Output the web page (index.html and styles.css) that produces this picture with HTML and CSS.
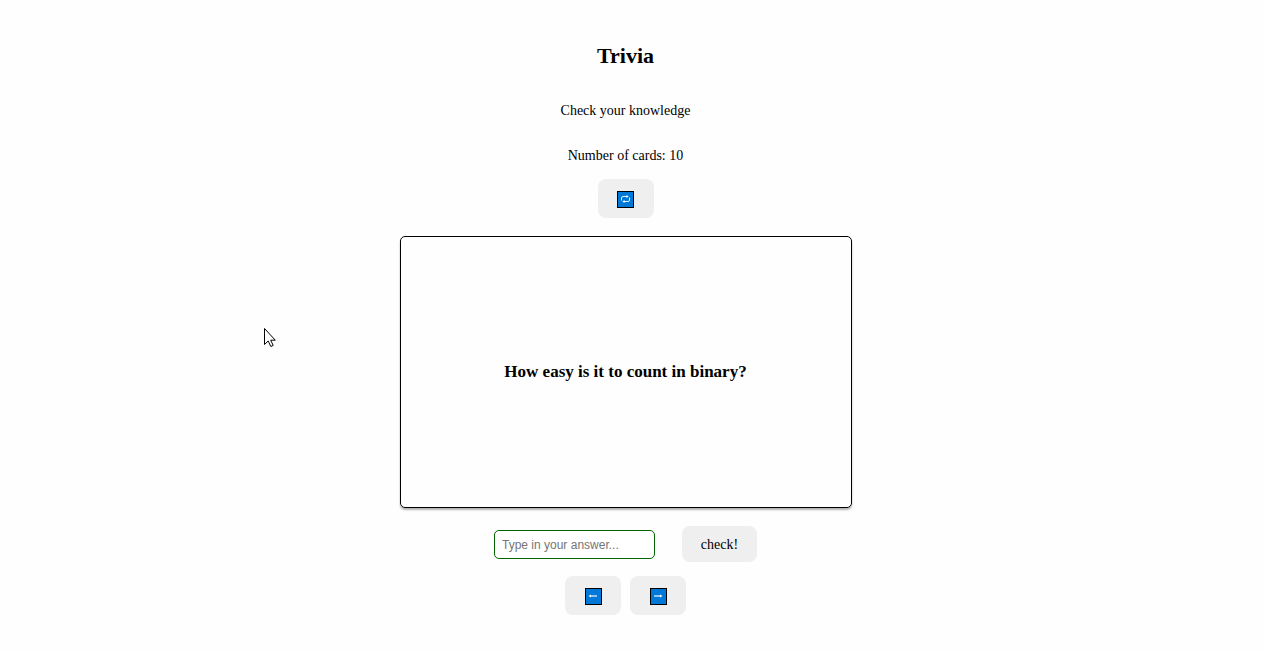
FILE: index.html
```html
<!DOCTYPE html>
<html lang="en">
<head>
<meta charset="utf-8">
<meta name="viewport" content="width=device-width, initial-scale=1">
<title>Trivia</title>
<link rel="stylesheet" href="styles.css">
</head>
<body class="page">
<main class="trivia">
  <header class="intro">
    <h1 class="title">Trivia</h1>
    <p class="subtitle">Check your knowledge</p>
    <p class="count">Number of cards: 10</p>
  </header>
  <button class="button icon-button" type="button" aria-label="Shuffle cards">
    <svg class="glyph" viewBox="0 0 17 17" aria-hidden="true">
      <rect class="tile" x="0.5" y="0.5" width="16" height="16"/>
      <path class="line" d="M11 5.500H6Q4.500 5.500 4.500 7V9.500M6 10.500H11Q12.500 10.500 12.500 9V6.500"/>
      <path class="head" d="M9.500 4L11.700 5.500L9.500 7ZM7.500 9L5.300 10.500L7.500 12Z"/>
    </svg>
  </button>
  <section class="card">
    <h2 class="question">How easy is it to count in binary?</h2>
  </section>
  <form class="answer-form">
    <input class="answer" type="text" aria-label="Your answer" placeholder="Type in your answer...">
    <button class="button check" type="button">check!</button>
  </form>
  <nav class="card-nav" aria-label="Cards">
    <button class="button icon-button" type="button" aria-label="Previous card">
      <svg class="glyph" viewBox="0 0 17 17" aria-hidden="true">
        <rect class="tile" x="0.5" y="0.5" width="16" height="16"/>
        <path class="shaft" d="M5 8H12"/>
        <path class="head" d="M3.500 8L6 6.500V9.500Z"/>
      </svg>
    </button>
    <button class="button icon-button" type="button" aria-label="Next card">
      <svg class="glyph" viewBox="0 0 17 17" aria-hidden="true">
        <rect class="tile" x="0.5" y="0.5" width="16" height="16"/>
        <path class="shaft" d="M4 8H11"/>
        <path class="head" d="M12.500 8L10 6.500V9.500Z"/>
      </svg>
    </button>
  </nav>
</main>
<svg class="cursor" viewBox="0 0 13 20" aria-hidden="true">
  <path d="M0.500 0.500V16.500L4.200 13L6.800 18.500L9.200 17.400L6.700 12.200H11.300Z"/>
</svg>
</body>
</html>
```
FILE: styles.css
```css
* {
  box-sizing: border-box;
}

.page {
  margin: 0;
  padding: 0 14px 0 0;
  background: #fefefe;
  color: #000;
  font: 14px/16px "Liberation Serif", "Times New Roman", serif;
}

.trivia {
  display: flex;
  flex-direction: column;
  align-items: center;
  padding: 43px 16px 36px;
}

.intro {
  text-align: center;
}

.title {
  margin: 0;
  font-size: 22px;
  line-height: 26px;
}

.subtitle {
  margin: 34px 0 0;
}

.count {
  margin: 29px 0 15px;
}

.button {
  height: 36px;
  padding: 0 18px;
  border: 0;
  border-radius: 8px;
  background: #efefef;
  color: #000;
  font: inherit;
}

.icon-button {
  display: flex;
  align-items: center;
  justify-content: center;
  width: 56px;
  height: 39px;
  padding-top: 1px;
}

.check {
  min-width: 75px;
  padding-top: 1px;
}

.glyph {
  flex: none;
  width: 17px;
  height: 17px;
}

.tile {
  fill: #0078d7;
  stroke: #000;
}

.line {
  fill: none;
  stroke: #e4f1fb;
}

.shaft {
  stroke: #8fc5ef;
  stroke-width: 2;
}

.head {
  fill: #fff;
}

.card {
  display: flex;
  align-items: center;
  justify-content: center;
  width: 100%;
  max-width: 452px;
  min-height: 272px;
  margin-top: 18px;
  padding: 18px;
  border: 1px solid #000;
  border-radius: 5px;
  box-shadow: 0 2px 2px rgba(0, 0, 0, 0.3);
}

.question {
  margin: 0;
  font-size: 17px;
  line-height: 20px;
}

.answer-form {
  display: flex;
  align-items: center;
  gap: 27px;
  margin-top: 18px;
}

.answer {
  width: 161px;
  height: 29px;
  padding: 1px 7px 0;
  border: 1px solid #006400;
  border-radius: 5px;
  background: #fff;
  font: 12px "Liberation Sans", Arial, sans-serif;
}

.answer::placeholder {
  color: #757575;
}

.card-nav {
  display: flex;
  gap: 9px;
  margin-top: 14px;
}

.cursor {
  position: absolute;
  top: 328px;
  left: 264px;
  width: 13px;
  height: 20px;
  fill: #fff;
  stroke: #000;
}
```
